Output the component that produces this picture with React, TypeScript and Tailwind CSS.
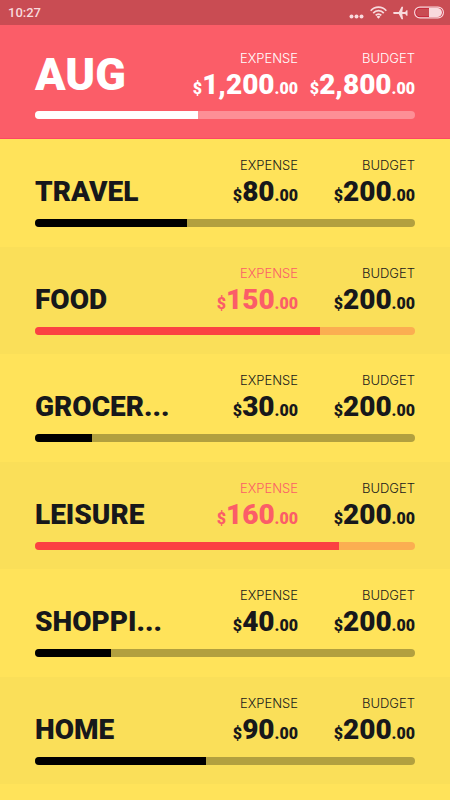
import React from "react";

type Budget = {
  name: string;
  expense: string;
  budget: string;
  percent: number;
  over?: boolean;
};

const categories: Budget[] = [
  { name: "TRAVEL", expense: "80", budget: "200", percent: 40 },
  { name: "FOOD", expense: "150", budget: "200", percent: 75, over: true },
  { name: "GROCER...", expense: "30", budget: "200", percent: 15 },
  { name: "LEISURE", expense: "160", budget: "200", percent: 80, over: true },
  { name: "SHOPPI...", expense: "40", budget: "200", percent: 20 },
  { name: "HOME", expense: "90", budget: "200", percent: 45 },
];

function Amount({ label, value, tone = "" }: { label: string; value: string; tone?: string }) {
  return (
    <div className={`flex flex-col items-end whitespace-nowrap ${tone}`}>
      <span className="font-['Inter',sans-serif] text-[13px] leading-4 font-light">{label}</span>
      <span className="mt-[3px] text-[28px] leading-8 font-black">
        <span className="text-base font-black">$</span>
        {value}
        <span className="text-base font-black">.00</span>
      </span>
    </div>
  );
}

function Bar({ label, percent, track, fill }: { label: string; percent: number; track: string; fill: string }) {
  return (
    <div
      role="progressbar"
      aria-label={label}
      aria-valuenow={percent}
      aria-valuemin={0}
      aria-valuemax={100}
      className={`h-2 overflow-hidden rounded-full ${track}`}
    >
      <div className={`h-full ${fill}`} style={{ width: `${percent}%` }} />
    </div>
  );
}

function StatusBar() {
  return (
    <div className="flex h-[25px] items-center justify-between bg-[#c94c53] pr-[6px] pl-2 text-[#f8dadd]">
      <span className="text-[13px] font-medium">10:27</span>
      <div className="flex items-center gap-[6px]">
        <svg width="15" height="14" viewBox="0 0 15 14" fill="currentColor" aria-hidden="true">
          <circle cx="2.5" cy="10.5" r="2" />
          <circle cx="7.5" cy="10.5" r="2" />
          <circle cx="12.5" cy="10.5" r="2" />
        </svg>
        <svg width="17" height="13" viewBox="0 0 17 13" fill="none" stroke="currentColor" strokeWidth="1.7" aria-hidden="true">
          <path d="M.7 4.7C5-.1 12-.1 16.3 4.7" />
          <path d="M3.2 7.1c3-3.2 7.6-3.2 10.6 0" />
          <path d="M5.7 9.4c1.6-1.8 4-1.8 5.6 0" />
          <path d="M8.5 12.8 6.6 10.8a2.6 2.6 0 0 1 3.8 0Z" fill="currentColor" stroke="none" />
        </svg>
        <svg width="15" height="14" viewBox="0 0 15 14" fill="currentColor" aria-hidden="true">
          <path d="M1 6.1h4.8L8.6.8h1.5L9.3 6h2.9l1.3-1.8h1v5.6h-1L12.2 8H9.3l.8 5.2H8.6L5.8 7.9H1C-.2 7.7-.2 6.3 1 6.1Z" />
        </svg>
        <svg width="30" height="13" viewBox="0 0 30 13" aria-hidden="true">
          <rect x=".6" y="1.1" width="28.8" height="10.8" rx="5.4" fill="#c92036" stroke="#f8dadd" strokeWidth="1.2" />
          <rect x="2.2" y="2.7" width="25.6" height="7.6" rx="3.8" fill="#c94c53" />
          <path d="M15 2h8.5a4.5 4.5 0 0 1 0 9H15Z" fill="#f8dadd" />
        </svg>
      </div>
    </div>
  );
}

export default function App() {
  return (
    <div className="min-h-screen bg-[#ffe35a] font-['Roboto',sans-serif] text-[#17181b]">
      <StatusBar />
      <header className="h-[114px] border-b border-[#fb4766] bg-[#fb5d68] px-[35px] pt-[25px] text-white">
        <div className="flex items-start">
          <h1 className="flex-1 text-[45px] leading-[50px] font-black">AUG</h1>
          <Amount label="EXPENSE" value="1,200" />
          <div className="w-[117px]">
            <Amount label="BUDGET" value="2,800" />
          </div>
        </div>
        <div className="mt-[10px]">
          <Bar label="August spending" percent={43} track="bg-[#fd8f96]" fill="bg-white" />
        </div>
      </header>
      <main className="grid h-[645px] grid-rows-6">
        {categories.map((c) => (
          <section key={c.name} className="px-[35px] pt-[18px] even:bg-[#fadf59]">
            <div className="flex items-end">
              <h2 className="flex-1 text-[28px] leading-8 font-black">{c.name}</h2>
              <Amount label="EXPENSE" value={c.expense} tone={c.over ? "text-[#fb5d68]" : ""} />
              <div className="w-[117px]">
                <Amount label="BUDGET" value={c.budget} />
              </div>
            </div>
            <div className="mt-[11px]">
              <Bar
                label={`${c.name} spending`}
                percent={c.percent}
                track={c.over ? "bg-[#fbae51]" : "bg-[#b2a03f]"}
                fill={c.over ? "bg-[#fb4142]" : "bg-black"}
              />
            </div>
          </section>
        ))}
      </main>
    </div>
  );
}
